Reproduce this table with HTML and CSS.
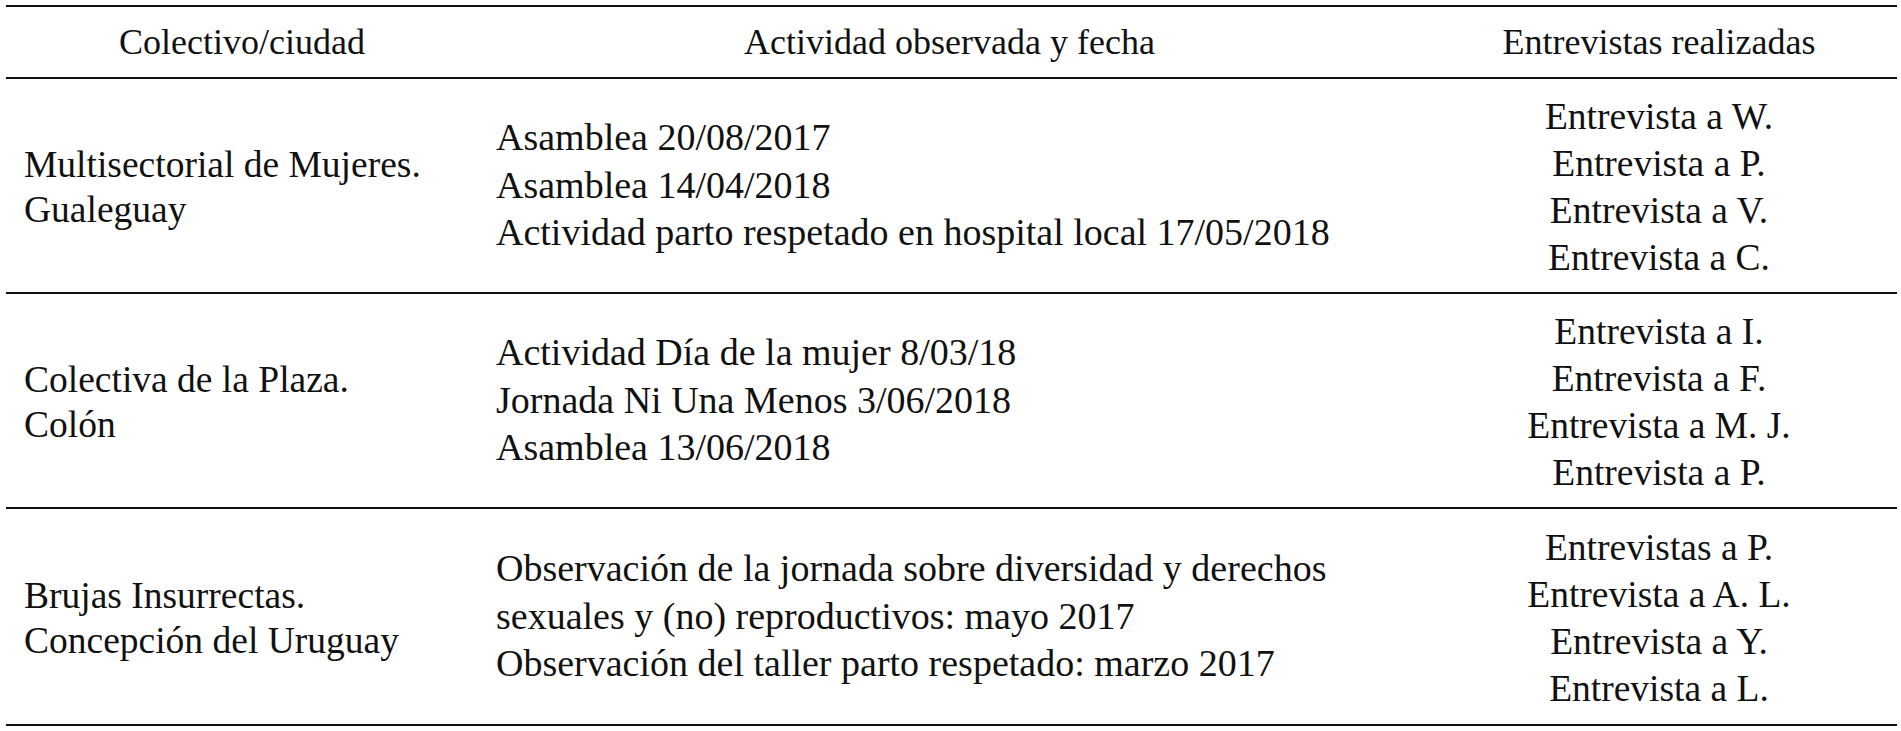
FILE: index.html
```html
<!DOCTYPE html>
<html lang="es">
<head>
<meta charset="utf-8">
<title>Tabla</title>
<link rel="stylesheet" href="styles.css">
</head>
<body>
<div class="table">
  <div class="row head">
    <div class="cell c1">Colectivo/ciudad</div>
    <div class="cell c2">Actividad observada y fecha</div>
    <div class="cell c3">Entrevistas realizadas</div>
  </div>
  <div class="row body">
    <div class="cell c1"><span class="ln">Multisectorial de Mujeres.</span><span class="ln">Gualeguay</span></div>
    <div class="cell c2"><span class="ln">Asamblea 20/08/2017</span><span class="ln">Asamblea 14/04/2018</span><span class="ln">Actividad parto respetado en hospital local 17/05/2018</span></div>
    <div class="cell c3"><span class="ln">Entrevista a W.</span><span class="ln">Entrevista a P.</span><span class="ln">Entrevista a V.</span><span class="ln">Entrevista a C.</span></div>
  </div>
  <div class="row body">
    <div class="cell c1"><span class="ln">Colectiva de la Plaza.</span><span class="ln">Colón</span></div>
    <div class="cell c2"><span class="ln">Actividad Día de la mujer 8/03/18</span><span class="ln">Jornada Ni Una Menos 3/06/2018</span><span class="ln">Asamblea 13/06/2018</span></div>
    <div class="cell c3"><span class="ln">Entrevista a I.</span><span class="ln">Entrevista a F.</span><span class="ln">Entrevista a M. J.</span><span class="ln">Entrevista a P.</span></div>
  </div>
  <div class="row body last">
    <div class="cell c1"><span class="ln">Brujas Insurrectas.</span><span class="ln">Concepción del Uruguay</span></div>
    <div class="cell c2"><span class="ln">Observación de la jornada sobre diversidad y derechos</span><span class="ln">sexuales y (no) reproductivos: mayo 2017</span><span class="ln">Observación del taller parto respetado: marzo 2017</span></div>
    <div class="cell c3"><span class="ln">Entrevistas a P.</span><span class="ln">Entrevista a A. L.</span><span class="ln">Entrevista a Y.</span><span class="ln">Entrevista a L.</span></div>
  </div>
</div>
</body>
</html>
```
FILE: styles.css
```css
html, body {
  margin: 0;
  padding: 0;
  background: #ffffff;
}
body {
  font-family: "Liberation Serif", "Times New Roman", serif;
  color: #111111;
}
.table {
  margin: 5px 0 0 6px;
  width: 1891px;
  border-top: 2px solid #111111;
}
.row {
  display: grid;
  grid-template-columns: 472px 943px 476px;
  border-bottom: 2px solid #111111;
}
.head {
  height: 70px;
  font-size: 36px;
}
.body {
  height: 213px;
}
.body.last {
  height: 215px;
}
.cell {
  display: flex;
  flex-direction: column;
  justify-content: center;
  white-space: nowrap;
}
.head .cell {
  align-items: center;
  line-height: 40px;
}
.body .c1 {
  padding-left: 18px;
  font-size: 37.5px;
  line-height: 45px;
  padding-top: 2px;
}
.body .c2 {
  padding-left: 18px;
  font-size: 38px;
  line-height: 47.5px;
}
.body .c3 {
  align-items: center;
  font-size: 37.5px;
  line-height: 47px;
  padding-top: 2px;
}
.ln {
  display: block;
}
```
